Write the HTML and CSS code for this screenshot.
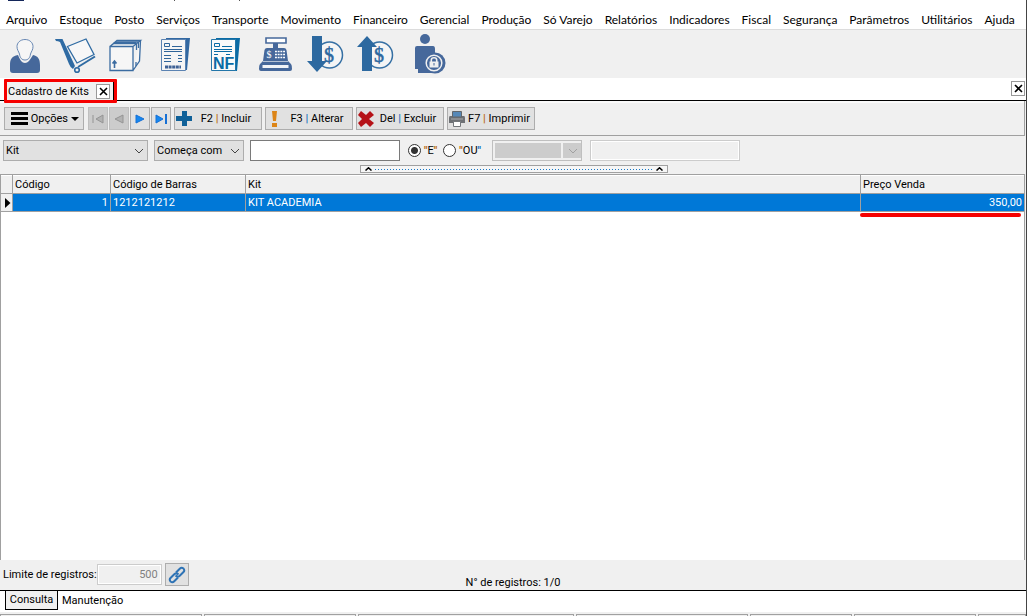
FILE: index.html
```html
<!DOCTYPE html>
<html lang="pt-BR">
<head>
<meta charset="utf-8">
<title>Cadastro de Kits</title>
<link rel="stylesheet" href="styles.css">
</head>
<body>
<div class="window">
  <div class="titlebar"><span class="app-icon"></span><i class="mark"></i><i class="mark mark-far"></i></div>
  <nav class="menu">
    <a href="#">Arquivo</a><a href="#">Estoque</a><a href="#">Posto</a><a href="#">Serviços</a><a href="#">Transporte</a><a href="#">Movimento</a><a href="#">Financeiro</a><a href="#">Gerencial</a><a href="#">Produção</a><a href="#">Só Varejo</a><a href="#">Relatórios</a><a href="#">Indicadores</a><a href="#">Fiscal</a><a href="#">Segurança</a><a href="#">Parâmetros</a><a href="#">Utilitários</a><a href="#">Ajuda</a>
  </nav>
  <div class="shortcuts">
    <button class="shortcut" aria-label="Clientes"><svg viewBox="0 30 50 48" fill="#46689b">
      <path d="M18 55C20 60 22 63 25 63S30 60 33 55C38 56 40 59 40 65V70Q40 73 37 73H13Q10 73 10 70V65C10 59 12 56 18 55Z"/>
      <path d="M25 39.500C30 39.500 33 43 33 46.500C33 50 31.500 51 30.500 54C30 58 28 60 25 60S20 58 19.500 54C18.500 51 17 50 17 46.500C17 43 20 39.500 25 39.500Z" fill="#f6f6f6" stroke="#6787b3"/></svg></button>
    <button class="shortcut" aria-label="Compras"><svg viewBox="0 30 50 48" fill="none" stroke="#2f6ba3">
      <path d="M5 39H12.500L25 66L23 69Q20 67 19 64L10 42Q8 41 6 41Z" fill="#2f6ba3" stroke="none"/>
      <path d="M17.500 46.500L36 39L44 54.500L27 63Z" stroke-width="1.300" fill="#f7f7f7"/><path d="M28 67L45 56.500" stroke-width="2"/><circle cx="27" cy="70" r="2.300" stroke-width="1.600"/></svg></button>
    <button class="shortcut" aria-label="Produtos"><svg viewBox="0 30 50 48" fill="none" stroke="#3b6ca1" stroke-width="1.300">
      <path d="M10 46.500H33V70.500H10ZM10 46.500L17 40.500H40.500L33 46.500M40.500 40.500L39.500 61L33 70.500" fill="#f6f6f6"/><path d="M13 43.500H36M15 42H38M36.500 44V50M38.500 42V48M36 66V62"/><path d="M14.500 68V61M12.500 63.500L14.500 61L16.500 63.500" stroke-width="1.600"/></svg></button>
    <button class="shortcut" aria-label="Pedidos"><svg viewBox="0 30 50 48">
      <path d="M16 38L40 38L37 70H28V40H16Z" fill="#3268a1"/><path d="M11.500 39.500H35.500V70.500H11.500Z" fill="#f5f5f5" stroke="#5b83b2"/>
      <path d="M14.500 43.500H19.500V46.500H14.500ZM22 46.500H32M14 49.500H32M14 51.500H32M14 55.500H21M28 55.500H32M14 58.500H21M28 58.500H32M14 61.500H21M28 61.500H32" fill="none" stroke="#2f6499"/><path d="M15 67H31" stroke="#3f6296" stroke-width="3" stroke-dasharray="3 .6"/></svg></button>
    <button class="shortcut" aria-label="Nota fiscal"><svg viewBox="0 30 50 48">
      <path d="M16 38L40 38L37 71H28V40H16Z" fill="#0a6ba5"/><path d="M11.500 39.500H35.500V70.500H11.500Z" fill="#fafafa" stroke="#2376a9"/>
      <path d="M14.500 43.500H19.500V46.500H14.500ZM22 46.500H32M14 49.500H32M14 51.500H32M14 54.500H18M26 54.500H30" fill="none" stroke="#0a6ba5"/><text x="13" y="69" class="nf">NF</text></svg></button>
    <button class="shortcut" aria-label="Caixa"><svg viewBox="0 30 50 48" fill="#46689b">
      <path d="M16 38H36V43H16Z" fill="#fff" stroke="#46689b" stroke-width="1.600"/><path d="M23 43H28V48H34Q36 48 36.500 50L38 61L41 64Q42 65 42 69Q42 71 40 71H11Q9 71 9 69Q9 65 10 64L13 61L14.500 50Q15 48 17 48H23Z"/>
      <path d="M12.500 65H38.500V68H12.500Z" fill="#f1f4f8"/><path d="M13 61.500H38" stroke="#b4c1d4"/><path d="M25 51.500H35M25 54.500H35M25 57.500H35" stroke="#fff" stroke-width="1.600" stroke-dasharray="1.900 .8"/><text x="16.500" y="58" class="coin coin-small">$</text></svg></button>
    <button class="shortcut" aria-label="Contas a receber"><svg viewBox="0 30 50 48">
      <circle cx="29.500" cy="55" r="13" fill="#f5f5f5" stroke="#3670a4" stroke-width="1.500"/><path d="M12 36H22V61H27L17 72L7 61H12Z" fill="#2d69a0"/><text x="24" y="62" class="coin">$</text></svg></button>
    <button class="shortcut" aria-label="Contas a pagar"><svg viewBox="0 30 50 48">
      <circle cx="29.500" cy="55" r="13" fill="#f5f5f5" stroke="#3670a4" stroke-width="1.500"/><path d="M12 71H22V47H27L17 36L7 47H12Z" fill="#2d69a0"/><text x="24" y="62" class="coin">$</text></svg></button>
    <button class="shortcut" aria-label="Bloquear usuário"><svg viewBox="0 30 50 48" fill="#46689b">
      <circle cx="25" cy="39" r="5"/><path d="M17 46H33Q35 46 35 49V73H18V69H15V48Q15 46 17 46Z"/><circle cx="35" cy="63" r="10.500"/><circle cx="34" cy="63" r="7.800" fill="none" stroke="#f0f0f0" stroke-width="1.500"/>
      <path d="M29.500 61.500H38.500V67.500H29.500Z" fill="#f0f0f0"/><path d="M31.300 62V60Q31.300 57.800 34 57.800T36.700 60V62" fill="none" stroke="#f0f0f0" stroke-width="1.600"/><path d="M34 63V65.500" stroke="#46689b"/></svg></button>
  </div>
  <div class="tabstrip">
    <div class="doc-tab"><span>Cadastro de Kits</span><button class="close" aria-label="Fechar aba"><svg viewBox="0 0 9 9"><path d="M1 1L8 8M8 1L1 8"/></svg></button></div>
    <button class="close" aria-label="Fechar"><svg viewBox="0 0 9 9"><path d="M1 1L8 8M8 1L1 8"/></svg></button>
  </div>
  <div class="commands">
    <button class="cmd options"><svg width="17" height="13" viewBox="0 0 17 13"><path d="M0 0H17V3H0ZM0 5H17V8H0ZM0 10H17V13H0Z"/></svg><span>Opções</span><svg width="8" height="4" viewBox="0 0 8 4"><path d="M0 0H8L4 4Z"/></svg></button>
    <div class="pager">
      <button class="cmd step" disabled aria-label="Primeiro"><svg viewBox="0 0 12 10"><path d="M1 1V9M11 1L4 5L11 9Z" fill="#b2b2b2" stroke="#949494"/></svg></button>
      <button class="cmd step" disabled aria-label="Anterior"><svg viewBox="0 0 12 10"><path d="M10 1L2 5L10 9Z" fill="#b2b2b2" stroke="#949494"/></svg></button>
      <button class="cmd step" aria-label="Próximo"><svg viewBox="0 0 12 10"><path d="M2 1L10 5L2 9Z" fill="#1687ef" stroke="#1670d5"/></svg></button>
      <button class="cmd step" aria-label="Último"><svg viewBox="0 0 12 10"><path d="M1 1L8 5L1 9Z" fill="#1687ef" stroke="#1670d5"/><path d="M11 0V10" stroke="#1670d5" stroke-width="2"/></svg></button>
    </div>
    <div class="actions">
      <button class="cmd action"><svg viewBox="0 0 18 16"><path d="M7 0H12V5H17V10H12V15H7V10H1V5H7Z" fill="#0f6098"/></svg><span>F2 <i class="warm">|</i> Incluir</span></button>
      <button class="cmd action"><svg viewBox="0 0 18 16"><path d="M6 0H11L10 10H7ZM6 12H11V16H6Z" fill="#dc8518"/></svg><span>F3 <i class="cool">|</i> Alterar</span></button>
      <button class="cmd action"><svg viewBox="0 0 18 16"><path d="M4 0L9 4L13 0L17 4L12 8L17 12L13 16L9 12L4 16L1 12L5 8L1 4Z" fill="#b51218"/></svg><span>Del <i class="cool">|</i> Excluir</span></button>
      <button class="cmd action"><svg viewBox="0 0 18 16"><path d="M2 5H16Q17 5 17 7V12H1V7Q1 5 2 5Z" fill="#6e7175"/><path d="M4.500 .5H13.500V6H4.500Z" fill="#5688b7" stroke="#62666a"/><path d="M5.500 10.500H12.500V15.500H5.500Z" fill="#fff" stroke="#73777b"/><path d="M3 8H15" stroke="#a7aaad"/></svg><span>F7 <i class="warm">|</i> Imprimir</span></button>
    </div>
  </div>
  <div class="filters">
    <select class="field field-select by" aria-label="Campo"><option>Kit</option></select>
    <select class="field field-select mode" aria-label="Condição"><option>Começa com</option></select>
    <input class="field term" type="text" aria-label="Valor">
    <div class="radios">
      <label><input type="radio" name="op" checked><span><i class="warm">"</i>E<i class="warm">"</i></span></label>
      <label><input type="radio" name="op"><span><i class="warm">"</i>OU<i class="cool">"</i></span></label>
    </div>
    <select class="field field-select second" disabled aria-label="Segunda condição"><option></option></select>
    <input class="field second-term" type="text" disabled aria-label="Segundo valor">
  </div>
  <div class="splitter-row"><button class="splitter" aria-label="Recolher filtros"><svg viewBox="0 0 7 4"><path d="M.5 3.500L3.500 .8L6.500 3.500"/></svg><span class="dots"></span><svg viewBox="0 0 7 4"><path d="M.5 3.500L3.500 .8L6.500 3.500"/></svg></button></div>
  <div class="grid">
    <table>
      <colgroup><col class="c-mark"><col class="c-code"><col class="c-bar"><col><col class="c-price"></colgroup>
      <thead><tr><th></th><th>Código</th><th>Código de Barras</th><th>Kit</th><th>Preço Venda</th></tr></thead>
      <tbody><tr><td class="pointer"><svg viewBox="0 0 6 10"><path d="M0 0L5.500 5L0 10Z"/></svg></td><td class="num">1</td><td>1212121212</td><td>KIT ACADEMIA</td><td class="num price">350,00</td></tr></tbody>
    </table>
  </div>
  <div class="footer">
    <div class="limit"><label for="limit">Limite de registros:</label><input id="limit" class="field" type="text" value="500" disabled>
      <button class="cmd link" aria-label="Vincular"><svg viewBox="0 0 18 18" fill="none" stroke="#2e73b5" stroke-width="2"><path d="M8 6.500L12 2.500Q13.500 1 15.500 2.500Q17 4.500 15.500 6L11.500 10Q9.500 11.500 7.500 9.500"/><path d="M10 11.500L6 15.500Q4.500 17 2.500 15.500Q1 13.500 2.500 12L6.500 8Q8.500 6.500 10.500 8.500"/></svg></button></div>
    <span class="count">N° de registros: 1/0</span>
  </div>
  <div class="page-tabs"><button class="page-tab active">Consulta</button><button class="page-tab">Manutenção</button></div>
  <div class="status"><span></span><span></span><span></span><span></span><span></span><span></span><span></span></div>
</div>
</body>
</html>
```
FILE: styles.css
```css
* { box-sizing: border-box; }
body { margin: 0; background: #f0f0f0; color: #000; font: 11px/14px Roboto, sans-serif; }
button, input, select { font: inherit; color: inherit; margin: 0; border-radius: 0; }
button { padding: 0; border: 0; background: none; white-space: nowrap; }
svg { display: block; flex: none; }
i { font-style: normal; font-weight: 700; }
.warm { color: #b96b12; }
.cool { color: #1672bd; }
.window { display: flex; flex-direction: column; min-height: 100vh; border-right: 1px solid #444; overflow: hidden; }

.titlebar { display: flex; height: 2px; padding-left: 8px; background: #fff; }
.app-icon { width: 16px; height: 1px; background: #14275a; }
.mark { width: 1px; height: 1px; margin-left: 150px; background: #555; }
.mark-far { margin-left: 64px; }
.menu { display: flex; gap: 12px; height: 28px; padding: 10px 6px 0; background: #fff; border-bottom: 1px solid #dcdcdc; font: 12px/16px Lato, sans-serif; }
.menu a { color: #000; text-decoration: none; white-space: nowrap; }

.shortcuts { display: flex; height: 48px; }
.shortcut { width: 50px; height: 48px; }
.shortcut svg { width: 50px; height: 48px; }
.nf { font: bold 16px "Liberation Sans", sans-serif; fill: #0a6ba5; }
.coin { font: 20px "Liberation Serif", serif; fill: #2d69a0; stroke: #2d69a0; stroke-width: .5px; }
.coin-small { font-size: 10px; fill: #fff; stroke: none; }

.tabstrip { display: flex; justify-content: space-between; align-items: flex-start; height: 23px; padding: 3px 1px 0 4px; background: #fff; border-bottom: 1px solid #000; }
.doc-tab { position: relative; display: flex; justify-content: space-between; align-items: center; width: 110px; height: 19px; padding: 2px 3px 0 4px; background: #f0f0f0; border-right: 1px solid #000; }
.doc-tab::after { content: ""; position: absolute; inset: -2px -4px -3px 0; border: 3px solid #f60000; border-radius: 1px; }
.close { display: grid; place-items: center; width: 14px; height: 15px; background: #fff; border: 1px solid #999; }
.close svg { width: 9px; height: 9px; stroke: #000; stroke-width: 1.600px; }

.commands { display: flex; gap: 3px; height: 35px; padding: 6px 4px 4px; margin-right: 1px; border: solid #a0a0a0; border-width: 0 1px 1px 0; box-shadow: inset 0 2px #fafafa; }
.cmd { display: flex; align-items: center; height: 23px; background: #e1e1e1; border: 1px solid #adadad; }
.options { justify-content: flex-end; gap: 3px; width: 80px; padding-right: 4px; }
.pager { display: flex; gap: 1px; margin-left: 1px; }
.step { justify-content: center; width: 20px; }
.step svg { width: 12px; height: 10px; }
.step:disabled { background: #ccc; border-color: #bfbfbf; }
.actions { display: flex; gap: 3px; }
.action { width: 88px; padding-right: 2px; }
.action svg { width: 18px; height: 16px; }
.action span { flex: 1; text-align: center; }

.filters { display: flex; align-items: center; height: 29px; padding-left: 3px; }
.field { height: 21px; padding: 0 3px; background: #fff; border: 1px solid #7a7a7a; }
.field-select { appearance: none; padding: 1px 2px 0; border-color: #adadad; background: #e1e1e1 url("data:image/svg+xml,%3Csvg xmlns='http://www.w3.org/2000/svg' width='10' height='6'%3E%3Cpath d='M1 1L5 5L9 1' fill='none' stroke='%23444'/%3E%3C/svg%3E") no-repeat right 3px center; }
.by { width: 145px; margin-right: 6px; }
.mode { width: 90px; margin-right: 6px; }
.term { width: 150px; margin-right: 8px; }
.radios { display: flex; gap: 6px; width: 84px; }
.radios label { display: flex; align-items: center; gap: 3px; white-space: nowrap; }
.radios input { appearance: none; width: 13px; height: 13px; border: 1px solid #333; border-radius: 50%; background: #fff; }
.radios input:checked { background: radial-gradient(circle, #333 3px, #fff 4px); }
.second { width: 90px; margin-right: 8px; opacity: 1; }
.second:disabled { border-color: #bfbfbf; box-shadow: inset 2px 2px #f0f0f0, inset 0 -2px #f0f0f0; background: url("data:image/svg+xml,%3Csvg xmlns='http://www.w3.org/2000/svg' width='10' height='6'%3E%3Cpath d='M1 1L5 5L9 1' fill='none' stroke='%23a0a0a0'/%3E%3C/svg%3E") no-repeat right 3px center, linear-gradient(90deg, transparent 68px, #f0f0f0 68px, #f0f0f0 70px, #ccc 70px), #ccc; }
.second-term { width: 150px; }
.second-term:disabled, .limit input:disabled { background: #f0f0f0; border-color: #ccc; box-shadow: inset 0 0 0 1px #fff; }

.splitter-row { display: flex; justify-content: center; height: 9px; padding-left: 2px; }
.splitter { display: flex; align-items: center; width: 30%; height: 8px; padding: 0 4px; border: 1px solid #a0a0a0; background: #f6f6f6; }
.splitter svg { width: 7px; height: 4px; fill: none; stroke: #000; stroke-width: 1.500px; }
.dots { flex: 1; height: 1px; margin: 0 3px; background: repeating-linear-gradient(90deg, #1678c8 0 1px, transparent 1px 3px); }

.grid { flex: 1; margin-right: 1px; background: #fff; border: 1px solid #a0a0a0; border-bottom: 0; }
table { width: 100%; table-layout: fixed; border-collapse: separate; border-spacing: 0; }
th, td { height: 18px; padding: 1px 2px 0; border: solid #a0a0a0; border-width: 0 1px 1px 0; font-weight: 400; text-align: left; line-height: 16px; white-space: nowrap; }
th { height: 19px; padding-top: 2px; background: #f0f0f0; box-shadow: inset 0 1px #fff; }
th:last-child, td:last-child { border-right: 0; }
td { background: #0078d7; color: #fff; }
.c-mark { width: 12px; }
.c-code { width: 98px; }
.c-bar { width: 135px; }
.c-price { width: 163px; }
.pointer { background: #f0f0f0; padding: 0 0 0 4px; }
.pointer svg { width: 6px; height: 10px; }
.num { text-align: right; }
.price { position: relative; }
.price::after { content: ""; position: absolute; left: -1px; right: 3px; bottom: -6px; height: 4px; border-radius: 2px; background: #f60000; }

.footer { display: grid; grid-template-columns: 1fr auto 1fr; height: 31px; padding: 3px 3px 0; border-bottom: 1px solid #000; }
.limit { display: flex; align-items: center; height: 23px; white-space: nowrap; }
.limit input { width: 65px; text-align: right; color: #808080; }
.link { width: 24px; margin-left: 3px; justify-content: center; }
.link svg { width: 18px; height: 18px; }
.count { align-self: end; }
.page-tabs { display: flex; align-items: flex-start; height: 21px; padding-left: 5px; background: #fff; }
.page-tab { height: 19px; padding: 0 4px; }
.active { width: 53px; background: #f0f0f0; border: solid #000; border-width: 0 1px 1px; padding: 0; }
.status { display: grid; grid-template-columns: 202fr 152fr 216fr 172fr 102fr 122fr 48fr; gap: 2px; height: 4px; padding-top: 2px; }
.status span { border: solid #a0a0a0; border-width: 1px 1px 0; }
```
